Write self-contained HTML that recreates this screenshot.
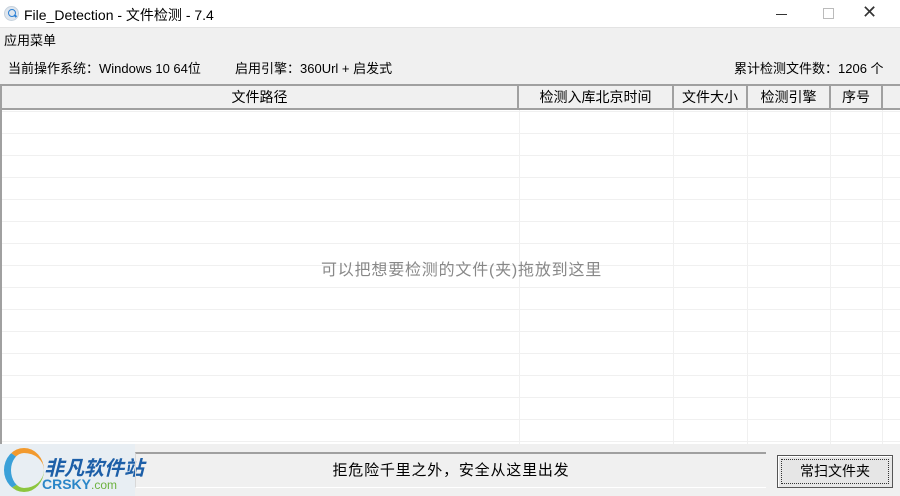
<!DOCTYPE html>
<html><head><meta charset="utf-8"><style>
*{margin:0;padding:0;box-sizing:border-box}
body{width:900px;height:496px;background:#f0f0f0;font-family:"Liberation Sans","Noto Sans CJK SC",sans-serif;position:relative;overflow:hidden;color:#000}
.abs{position:absolute}
#title{left:0;top:0;width:900px;height:28px;background:#fff;border-bottom:1px solid #e3e3e3}
#title .t{left:24px;top:5px;font-size:14px;color:#000}
.icon{left:4px;top:6px;width:15px;height:15px;border-radius:50%;background:#dfe6ee;border:1px solid #c7d2dd}
.icon:before{content:"";position:absolute;left:3px;top:2px;width:6px;height:6px;border:1.5px solid #2a7fd4;border-radius:50%}
.icon:after{content:"";position:absolute;left:9px;top:8px;width:3px;height:1.6px;background:#2a7fd4;transform:rotate(45deg)}
.txt{font-size:13px;white-space:nowrap}
#table{left:0;top:84px;width:900px;height:360px;background:#fff;border-left:2px solid #a0a0a0;border-top:2px solid #a0a0a0}
#hdr{left:0;top:0;width:898px;height:24px;background:#f0f0f0;border-bottom:2px solid #a0a0a0}
.hc{position:absolute;top:0;height:22px;border-right:2px solid #a0a0a0;font-size:14px;text-align:center;line-height:22px}
#rows{left:0;top:24px;width:898px;height:334px;background:repeating-linear-gradient(to bottom,#fff 0,#fff 1px,#f0f0f0 1px,#f0f0f0 2px,#fff 2px,#fff 22px)}
.vl{position:absolute;top:24px;width:1px;height:334px;background:#f0f0f0}
</style></head><body>
<div id="title" class="abs">
<div class="abs icon"></div>
<div class="abs t">File_Detection - 文件检测 - 7.4</div>
<div class="abs" style="left:776px;top:14px;width:11px;height:1px;background:#333"></div>
<div class="abs" style="left:823px;top:8px;width:11px;height:11px;border:1px solid #bbb"></div>
<div class="abs" style="left:862px;top:2px;font-size:18px;color:#333;font-weight:300">✕</div>
</div>
<div class="abs txt" style="left:4px;top:30px">应用菜单</div>
<div class="abs txt" style="left:8px;top:58px">当前操作系统：Windows 10 64位</div>
<div class="abs txt" style="left:235px;top:58px">启用引擎：360Url + 启发式</div>
<div class="abs txt" style="left:734px;top:58px">累计检测文件数：1206 个</div>
<div id="table" class="abs">
<div id="hdr" class="abs">
<div class="hc" style="left:0;width:517px">文件路径</div>
<div class="hc" style="left:517px;width:155px">检测入库北京时间</div>
<div class="hc" style="left:672px;width:74px">文件大小</div>
<div class="hc" style="left:746px;width:83px">检测引擎</div>
<div class="hc" style="left:829px;width:52px">序号</div>
</div>
<div id="rows" class="abs"></div>
<div class="vl" style="left:517px"></div>
<div class="vl" style="left:671px"></div>
<div class="vl" style="left:745px"></div>
<div class="vl" style="left:828px"></div>
<div class="vl" style="left:880px"></div>
<div class="abs" style="left:319px;top:170px;font-size:16px;letter-spacing:0.8px;color:#888;white-space:nowrap">可以把想要检测的文件(夹)拖放到这里</div>
</div>
<div class="abs" style="left:0;top:444px;width:135px;height:52px;background:#e8eef3">
<div class="abs" style="left:4px;top:4px;width:40px;height:44px;border-radius:50%;border-left:7px solid #3aa0d8;border-top:5px solid #f29a2e;border-bottom:4px solid #8cc63f"></div>
<div class="abs" style="left:44px;top:8px;font-size:20px;font-weight:bold;font-style:italic;color:#1d5fa8;white-space:nowrap">非凡软件站</div>
<div class="abs" style="left:42px;top:32px;font-size:14px;font-weight:bold;color:#2a86c8;white-space:nowrap">CRSKY<span style="font-weight:normal;color:#6cb23f;font-size:12px">.com</span></div>
</div>
<div class="abs" style="left:135px;top:452px;width:631px;height:36px;border-top:2px solid #a0a0a0;border-left:1px solid #d8d8d8;border-bottom:1px solid #fff;text-align:center;line-height:33px;font-size:15px;letter-spacing:0.8px">拒危险千里之外，安全从这里出发</div>
<div class="abs" style="left:777px;top:455px;width:116px;height:33px;border:1px solid #555;background:#e6e6e6;box-shadow:inset 1px 1px 0 #fff">
<div class="abs" style="left:3px;top:3px;width:108px;height:25px;border:1px dotted #333;text-align:center;line-height:23px;font-size:14px">常扫文件夹</div>
</div>
</body></html>
